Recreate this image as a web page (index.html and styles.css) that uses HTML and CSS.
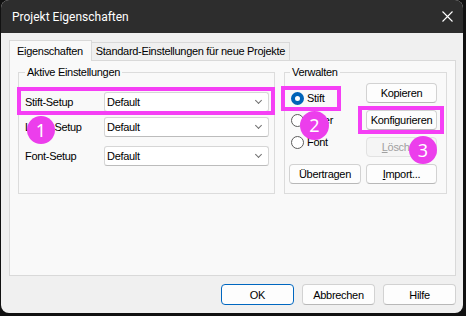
FILE: index.html
```html
<!DOCTYPE html>
<html lang="de">
<head>
    <meta charset="UTF-8">
    <title>Projekt Eigenschaften</title>
    <link rel="stylesheet" href="styles.css">
</head>
<body>
    <div class="window">
        <!-- Title bar -->
        <div class="titlebar">
            <span class="title">Projekt Eigenschaften</span>
            <svg class="close" width="11" height="11" viewBox="0 0 11 11">
                <path d="M0.5 0.5 L10.5 10.5 M10.5 0.5 L0.5 10.5" stroke="#fff" stroke-width="1.1" fill="none"/>
            </svg>
        </div>

        <div class="client">
            <div class="tabs">
                <div class="tab active">Eigenschaften</div>
                <div class="tab">Standard-Einstellungen für neue Projekte</div>
            </div>

            <div class="panel">
                <!-- Active settings -->
                <fieldset class="group group-settings">
                    <legend>Aktive Einstellungen</legend>
                    <div class="setting-row">
                        <span class="setting-label">Stift-Setup</span>
                        <div class="combo">Default<span class="chevron"></span></div>
                    </div>
                    <div class="setting-row">
                        <span class="setting-label">Layer-Setup</span>
                        <div class="combo">Default<span class="chevron"></span></div>
                    </div>
                    <div class="setting-row font-row">
                        <span class="setting-label">Font-Setup</span>
                        <div class="combo">Default<span class="chevron"></span></div>
                    </div>
                </fieldset>

                <!-- Manage -->
                <fieldset class="group group-manage">
                    <legend>Verwalten</legend>
                    <div class="manage-grid">
                        <div class="radios">
                            <label class="radio"><span class="dot checked"></span>Stift</label>
                            <label class="radio"><span class="dot"></span>Layer</label>
                            <label class="radio"><span class="dot"></span>Font</label>
                        </div>
                        <button class="btn col-right">Kopieren</button>
                        <button class="btn col-right">Konfigurieren</button>
                        <button class="btn col-right" disabled><u>L</u>öschen</button>
                        <button class="btn">Übertragen</button>
                        <button class="btn"><u>I</u>mport...</button>
                    </div>
                </fieldset>
            </div>

            <div class="footer">
                <button class="btn dialog-btn default">OK</button>
                <button class="btn dialog-btn">Abbrechen</button>
                <button class="btn dialog-btn">Hilfe</button>
            </div>
        </div>

        <!-- Tutorial markers -->
        <div class="mark mark-1"></div>
        <div class="mark mark-2"></div>
        <div class="mark mark-3"></div>
        <div class="badge badge-1">1</div>
        <div class="badge badge-2">2</div>
        <div class="badge badge-3">3</div>
    </div>
</body>
</html>
```
FILE: styles.css
```css
* {
  box-sizing: border-box;
}

body {
  margin: 0;
  background: #111;
  font: 11px "Liberation Sans", Arial, sans-serif;
  letter-spacing: -0.3px;
  color: #000;
}

.window {
  position: relative;
  width: 462px;
  height: 313px;
  margin-left: 1px;
  background: #f0f0f0;
  border-radius: 8px;
  overflow: hidden;
  display: flex;
  flex-direction: column;
}

/* Title bar */
.titlebar {
  flex: none;
  height: 33px;
  background: #2d2d2d;
  color: #fff;
  display: flex;
  align-items: center;
  justify-content: space-between;
  padding: 0 10px 0 11px;
  font: 12px Roboto, sans-serif;
  letter-spacing: 0;
}

.close {
  display: block;
}

.client {
  flex: 1;
  padding: 7px 7px 0 8px;
  display: flex;
  flex-direction: column;
}

/* Tabs */
.tabs {
  display: flex;
  align-items: flex-end;
  height: 20px;
}

.tab {
  height: 18px;
  line-height: 17px;
  padding: 0 4px;
  border: 1px solid #d9d9d9;
  border-bottom: none;
  border-left: none;
  background: #f0f0f0;
  white-space: nowrap;
}

.tab.active {
  position: relative;
  z-index: 1;
  height: 21px;
  margin-bottom: -1px;
  line-height: 20px;
  padding: 0 8px 0 7px;
  border-left: 1px solid #d9d9d9;
  background: #f9f9f9;
}

.panel {
  height: 216px;
  background: #f9f9f9;
  border: 1px solid #d9d9d9;
  display: flex;
  align-items: flex-start;
  gap: 9px;
  padding: 4px 8px 0 8px;
}

/* Group boxes */
.group {
  margin: 0;
  height: 129px;
  min-width: 0;
  border: 1px solid #dcdcdc;
}

.group legend {
  padding: 0 2px;
  line-height: 14px;
}

.group-settings {
  width: 257px;
  padding: 13px 5px 0 6px;
}

.group-manage {
  width: 163px;
  padding: 4px 0 0 4px;
}

.group-manage legend {
  margin-left: 1px;
}

.setting-row {
  display: flex;
  align-items: center;
  height: 20px;
}

.setting-row + .setting-row {
  margin-top: 5px;
}

.setting-row.font-row {
  margin-top: 9px;
}

.setting-label {
  width: 79px;
}

.combo {
  position: relative;
  width: 165px;
  height: 20px;
  line-height: 18px;
  padding-left: 2px;
  background: #fff;
  border: 1px solid #d6d6d6;
  border-bottom-color: #bcbcbc;
  border-radius: 3px;
}

.chevron {
  position: absolute;
  right: 7px;
  top: 5px;
  width: 5px;
  height: 5px;
  border-right: 1px solid #707070;
  border-bottom: 1px solid #707070;
  transform: rotate(45deg);
}

.manage-grid {
  display: grid;
  grid-template-columns: 72px 71px;
  grid-auto-rows: 20px;
  column-gap: 5px;
  row-gap: 7px;
}

.col-right {
  grid-column: 2;
}

.radios {
  grid-column: 1;
  grid-row: 1 / span 3;
  padding-top: 4px;
}

.radio {
  display: flex;
  align-items: center;
  height: 22px;
  gap: 3px;
}

.dot {
  width: 13px;
  height: 13px;
  margin-left: 2px;
  border: 1px solid #5c5c5c;
  border-radius: 50%;
  background: #fff;
}

.dot.checked {
  border: 4px solid #0063b8;
  background: #fff;
}

/* Buttons */
.btn {
  height: 20px;
  padding: 0;
  font: inherit;
  letter-spacing: inherit;
  color: #000;
  background: #fdfdfd;
  border: 1px solid #d2d2d2;
  border-bottom-color: #b8b8b8;
  border-radius: 4px;
}

.btn:disabled {
  color: #a0a0a0;
  background: #f5f5f5;
  border-color: #e2e2e2;
}

.footer {
  display: flex;
  justify-content: flex-end;
  gap: 8px;
  padding-top: 8px;
}

.dialog-btn {
  width: 73px;
  height: 21px;
}

.dialog-btn.default {
  border-color: #0067c0;
}

/* Magenta markers over the dialog */
.mark {
  position: absolute;
  border: 4px solid #f53ff5;
}

.mark-1 {
  left: 16px;
  top: 87px;
  width: 258px;
  height: 28px;
}

.mark-2 {
  left: 280px;
  top: 86px;
  width: 60px;
  height: 25px;
}

.mark-3 {
  left: 357px;
  top: 106px;
  width: 86px;
  height: 28px;
}

.badge {
  position: absolute;
  width: 28px;
  height: 28px;
  border-radius: 50%;
  background: #ec3eec;
  color: #fff;
  font: 18px "Noto Sans", sans-serif;
  letter-spacing: 0;
  line-height: 28px;
  text-align: center;
}

.badge-1 {
  left: 26px;
  top: 116px;
}

.badge-2 {
  left: 299px;
  top: 111px;
  width: 29px;
  height: 29px;
  line-height: 29px;
}

.badge-3 {
  left: 408px;
  top: 136px;
}
```
